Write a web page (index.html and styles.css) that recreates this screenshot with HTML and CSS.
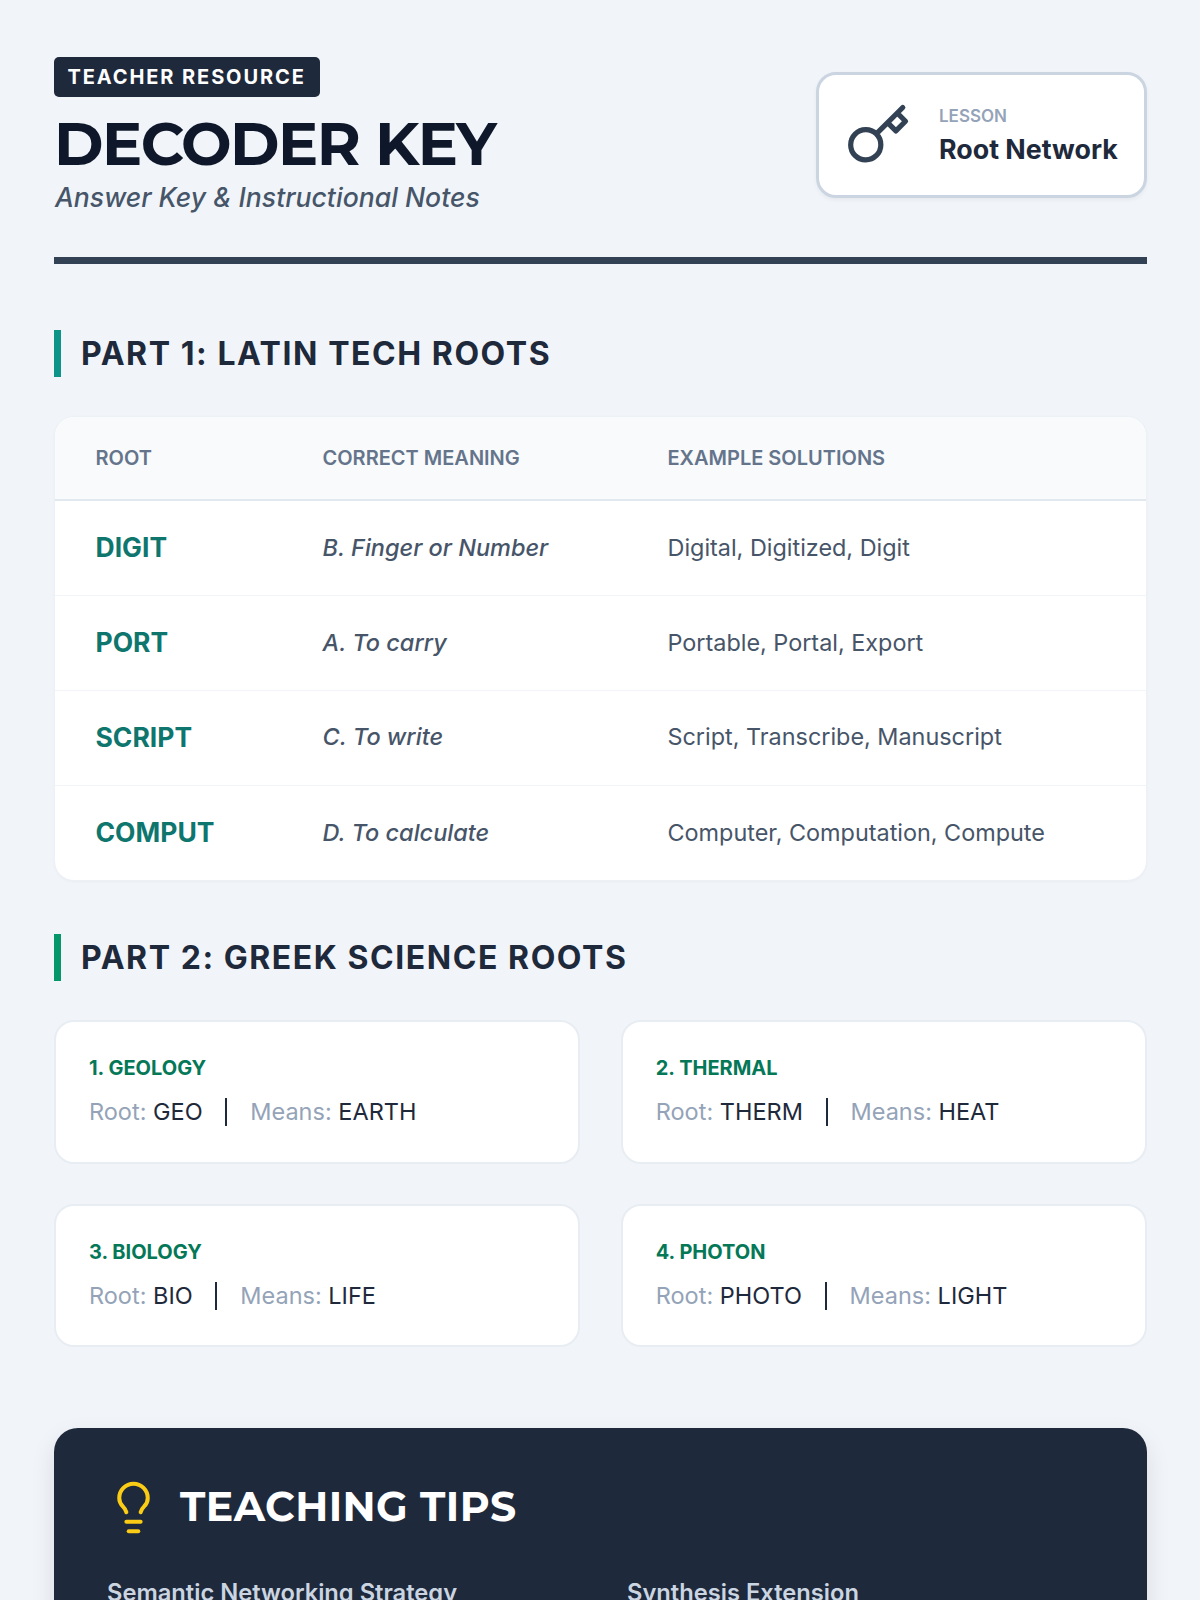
FILE: index.html
```html
<!DOCTYPE html>
<html lang="en">
<head>
<meta charset="utf-8">
<title>Decoder Key</title>
<link rel="stylesheet" href="styles.css">
</head>
<body>
<div class="page">
  <header class="header">
    <div class="header-left">
      <span class="badge">TEACHER RESOURCE</span>
      <h1 class="title">DECODER KEY</h1>
      <p class="subtitle">Answer Key &amp; Instructional Notes</p>
    </div>
    <div class="lesson">
      <svg class="lesson-icon" viewBox="0 0 24 24" fill="none" stroke="#334155" stroke-width="1.9" stroke-linecap="round" stroke-linejoin="round"><path d="M21 2l-2 2m-7.61 7.61a5.5 5.5 0 1 1-7.778 7.778 5.5 5.5 0 0 1 7.777-7.777zm0 0L15.5 7.5m0 0l3 3L22 7l-3-3m-3.5 3.5L19 4"/></svg>
      <div>
        <div class="lesson-label">LESSON</div>
        <div class="lesson-name">Root Network</div>
      </div>
    </div>
  </header>

  <h2 class="section section-teal">PART 1: LATIN TECH ROOTS</h2>
  <div class="table-card">
    <div class="row row-head"><div>ROOT</div><div>CORRECT MEANING</div><div>EXAMPLE SOLUTIONS</div></div>
    <div class="row"><div class="root">DIGIT</div><div class="meaning">B. Finger or Number</div><div class="examples">Digital, Digitized, Digit</div></div>
    <div class="row"><div class="root">PORT</div><div class="meaning">A. To carry</div><div class="examples">Portable, Portal, Export</div></div>
    <div class="row"><div class="root">SCRIPT</div><div class="meaning">C. To write</div><div class="examples">Script, Transcribe, Manuscript</div></div>
    <div class="row"><div class="root">COMPUT</div><div class="meaning">D. To calculate</div><div class="examples">Computer, Computation, Compute</div></div>
  </div>

  <h2 class="section section-green">PART 2: GREEK SCIENCE ROOTS</h2>
  <div class="cards">
    <div class="card"><div class="card-title">1. GEOLOGY</div><div class="card-line"><span><span class="muted">Root:</span> GEO</span><i class="sep"></i><span><span class="muted">Means:</span> EARTH</span></div></div>
    <div class="card"><div class="card-title">2. THERMAL</div><div class="card-line"><span><span class="muted">Root:</span> THERM</span><i class="sep"></i><span><span class="muted">Means:</span> HEAT</span></div></div>
    <div class="card"><div class="card-title">3. BIOLOGY</div><div class="card-line"><span><span class="muted">Root:</span> BIO</span><i class="sep"></i><span><span class="muted">Means:</span> LIFE</span></div></div>
    <div class="card"><div class="card-title">4. PHOTON</div><div class="card-line"><span><span class="muted">Root:</span> PHOTO</span><i class="sep"></i><span><span class="muted">Means:</span> LIGHT</span></div></div>
  </div>

  <section class="tips">
    <div class="tips-head">
      <svg class="tips-icon" viewBox="0 0 24 24" fill="none" stroke="#facc15" stroke-width="1.7" stroke-linecap="round" stroke-linejoin="round"><path d="M15 14c.2-1 .7-1.7 1.5-2.5 1-.9 1.5-2.2 1.5-3.5A6 6 0 0 0 6 8c0 1 .2 2.2 1.5 3.5.7.7 1.3 1.5 1.5 2.5"/><path d="M9 18h6"/><path d="M10 22h4"/></svg>
      <h2 class="tips-title">TEACHING TIPS</h2>
    </div>
    <div class="tips-grid">
      <h3 class="tip-title">Semantic Networking Strategy</h3>
      <h3 class="tip-title">Synthesis Extension</h3>
    </div>
  </section>
</div>
</body>
</html>
```

FILE: styles.css
```css
* { box-sizing: border-box; }
html, body { margin: 0; height: 1600px; overflow: hidden; }
body { background: #f1f5f9; font-family: "Inter", "Liberation Sans", sans-serif; color: #1e293b; }
.page { height: 1600px; overflow: hidden; padding: 57px 53px 0 54px; }

.header { display: flex; justify-content: space-between; align-items: flex-start; height: 207px; padding-bottom: 7px; border-bottom: 7px solid #334155; }
.header-left { display: flex; flex-direction: column; align-items: flex-start; }
.badge { background: #1e293b; color: #fff; font-size: 20px; font-weight: 700; letter-spacing: 1.9px; line-height: 40px; height: 40px; padding: 0 14px 0 13.5px; border-radius: 5px; }
.title { margin: 14px 0 0; font-family: "Montserrat", "Inter", sans-serif; font-size: 60px; font-weight: 700; line-height: 66px; color: #0f172a; letter-spacing: -1.5px; }
.subtitle { margin: 2px 0 0 1px; font-size: 26.6px; font-style: italic; font-weight: 500; line-height: 36px; color: #475569; }
.lesson { display: flex; align-items: center; gap: 28px; width: 331px; height: 126px; margin-top: 15px; padding-left: 26px; background: #fff; border: 3px solid #cbd5e1; border-radius: 20px; box-shadow: 0 2px 4px rgba(15,23,42,.05); }
.lesson-icon { width: 66px; height: 66px; flex: none; }
.lesson-label { font-size: 17px; font-weight: 600; color: #94a3b8; line-height: 24px; }
.lesson-name { font-size: 26.8px; font-weight: 700; color: #1e293b; line-height: 36px; margin-top: 3px; }

.section { display: flex; align-items: center; height: 47px; margin: 66px 0 39px; padding-left: 20px; border-left: 7px solid #0d9488; font-size: 32px; font-weight: 700; letter-spacing: 1.55px; color: #1e293b; }
.section-green { border-left-color: #059669; margin: 53px 0 39.5px; }

.table-card { background: #fff; border: 1px solid #edf1f6; border-radius: 20px; overflow: hidden; box-shadow: 0 1px 3px rgba(15,23,42,.03); }
.row { display: grid; grid-template-columns: 227px 345px 1fr; align-items: center; height: 94.85px; padding: 0 0 1.5px 40.5px; border-bottom: 1px solid #f1f5f9; }
.row:last-child { height: 94.45px; border-bottom: 0; }
.row-head { height: 84px; padding-bottom: 0; background: #f8fafc; border-bottom: 2px solid #e2e8f0; font-size: 20px; font-weight: 600; color: #64748b; }
.root { font-size: 26.5px; font-weight: 700; color: #0f766e; }
.meaning { font-size: 23.5px; font-style: italic; font-weight: 500; color: #475569; }
.examples { font-size: 23.4px; color: #475569; }

.cards { display: grid; grid-template-columns: 1fr 1fr; gap: 40px 40.5px; }
.card { height: 143.5px; padding: 34px 33px 0; background: #fff; border: 2px solid #e8edf3; border-radius: 20px; }
.card-title { font-size: 20px; font-weight: 700; color: #047857; line-height: 24px; }
.card-line { display: flex; align-items: center; gap: 22.8px; margin-top: 17px; font-size: 23.5px; line-height: 30px; color: #1e293b; }
.muted { color: #94a3b8; }
.sep { width: 2px; height: 28px; background: #1e293b; }

.tips { margin-top: 80.5px; height: 300px; padding: 48.5px 54px 0; background: #1e293b; border-radius: 24px; box-shadow: 0 10px 25px rgba(15,23,42,.1); }
.tips-head { display: flex; align-items: center; gap: 18px; margin-left: -3px; }
.tips-icon { width: 57px; height: 57px; flex: none; margin-top: 3px; }
.tips-title { margin: 0; font-family: "Montserrat", "Inter", sans-serif; font-size: 41px; font-weight: 700; letter-spacing: .4px; color: #fff; }
.tips-grid { display: grid; grid-template-columns: 520px 1fr; margin: 42px 0 0 -1px; }
.tip-title { margin: 0; font-size: 23.7px; font-weight: 600; color: #cbd5e1; line-height: 30px; }
```
